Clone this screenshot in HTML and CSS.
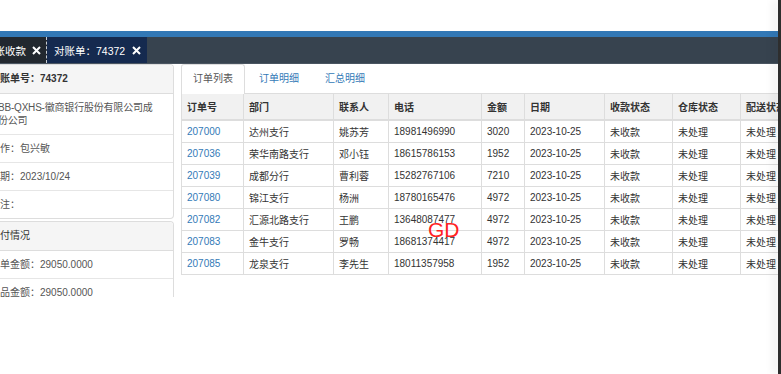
FILE: index.html
```html
<!DOCTYPE html>
<html lang="zh">
<head>
<meta charset="utf-8">
<link rel="stylesheet" href="styles.css">
</head>
<body>
<div class="page">
  <div class="top-space"></div>
  <div class="blue-bar"></div>
  <div class="tabbar">
    <div class="wtab wtab-prev"><span class="wtab-text">对账收款</span><svg class="x" viewBox="0 0 9 9"><path d="M1 1L8 8M8 1L1 8"/></svg></div>
    <div class="wtab wtab-cur"><span class="wtab-text">对账单：74372</span><svg class="x" viewBox="0 0 9 9"><path d="M1 1L8 8M8 1L1 8"/></svg></div>
  </div>
  <div class="content">
    <div class="left">
      <div class="panel">
        <div class="panel-head bold">账单号：74372</div>
        <div class="prow two">BB-QXHS-徽商银行股份有限公司成<br>份公司</div>
        <div class="prow">作：包兴敏</div>
        <div class="prow">期：2023/10/24</div>
        <div class="prow last">注：</div>
      </div>
      <div class="panel">
        <div class="panel-head">付情况</div>
        <div class="prow">单金额：29050.0000</div>
        <div class="prow">品金额：29050.0000</div>
      </div>
    </div>
    <div class="main">
      <div class="ntabs">
        <div class="ntab active">订单列表</div>
        <div class="ntab">订单明细</div>
        <div class="ntab">汇总明细</div>
      </div>
      <table class="grid">
        <colgroup>
          <col class="c1"><col class="c2"><col class="c3"><col class="c4"><col class="c5"><col class="c6"><col class="c7"><col class="c8"><col class="c9">
        </colgroup>
        <thead>
          <tr><th>订单号</th><th>部门</th><th>联系人</th><th>电话</th><th>金额</th><th>日期</th><th>收款状态</th><th>仓库状态</th><th>配送状态</th></tr>
        </thead>
        <tbody>
          <tr><td class="link">207000</td><td>达州支行</td><td>姚苏芳</td><td>18981496990</td><td>3020</td><td>2023-10-25</td><td>未收款</td><td>未处理</td><td>未处理</td></tr>
          <tr><td class="link">207036</td><td>荣华南路支行</td><td>邓小钰</td><td>18615786153</td><td>1952</td><td>2023-10-25</td><td>未收款</td><td>未处理</td><td>未处理</td></tr>
          <tr><td class="link">207039</td><td>成都分行</td><td>曹利蓉</td><td>15282767106</td><td>7210</td><td>2023-10-25</td><td>未收款</td><td>未处理</td><td>未处理</td></tr>
          <tr><td class="link">207080</td><td>锦江支行</td><td>杨洲</td><td>18780165476</td><td>4972</td><td>2023-10-25</td><td>未收款</td><td>未处理</td><td>未处理</td></tr>
          <tr><td class="link">207082</td><td>汇源北路支行</td><td>王鹏</td><td>13648087477</td><td>4972</td><td>2023-10-25</td><td>未收款</td><td>未处理</td><td>未处理</td></tr>
          <tr><td class="link">207083</td><td>金牛支行</td><td>罗畅</td><td>18681374417</td><td>4972</td><td>2023-10-25</td><td>未收款</td><td>未处理</td><td>未处理</td></tr>
          <tr><td class="link">207085</td><td>龙泉支行</td><td>李先生</td><td>18011357958</td><td>1952</td><td>2023-10-25</td><td>未收款</td><td>未处理</td><td>未处理</td></tr>
        </tbody>
      </table>
    </div>
  </div>
  <div class="watermark">GD</div>
  <div class="edge"></div>
</div>
</body>
</html>
```
FILE: styles.css
```css
html, body {
  margin: 0;
  padding: 0;
  background: #fff;
}
body {
  font-family: "Liberation Sans", "Noto Sans CJK SC", sans-serif;
  font-size: 10px;
  color: #333;
  width: 781px;
  height: 374px;
  overflow: hidden;
}
.page {
  position: relative;
  width: 781px;
  height: 374px;
  overflow: hidden;
}
.top-space {
  height: 31px;
}
.blue-bar {
  height: 6px;
  background: #3278b6;
}
.tabbar {
  height: 26px;
  background: #37434f;
  display: flex;
  border-bottom: 1px solid #4a5561;
}
.wtab {
  display: flex;
  align-items: center;
  color: #fff;
  font-size: 10.5px;
  white-space: nowrap;
  overflow: hidden;
}
.wtab-prev {
  width: 47px;
  background: #22282f;
  justify-content: flex-end;
  padding-right: 5px;
  box-sizing: border-box;
  border-right: 1px dashed #c8ccd2;
}
.wtab-cur {
  width: 100px;
  background: #152a4f;
  padding-left: 7px;
  box-sizing: border-box;
}
.x {
  width: 9px;
  height: 9px;
  margin-left: 6px;
  flex: none;
}
.wtab-cur .x {
  margin-left: 7px;
}
.x path {
  stroke: #fff;
  stroke-width: 2;
  fill: none;
}
.content {
  display: flex;
  height: 310px;
}
.left {
  width: 174px;
  height: 233px;
  overflow: hidden;
  flex: none;
}
.panel {
  border: 1px solid #dddddd;
  border-left: none;
  border-radius: 0 4px 4px 0;
  margin-bottom: 2px;
  background: #fff;
}
.panel-head {
  background: #f5f5f5;
  height: 28px;
  line-height: 28px;
  border-bottom: 1px solid #dddddd;
  border-radius: 0 4px 0 0;
  white-space: nowrap;
  color: #333;
}
.bold {
  font-weight: bold;
}
.prow {
  padding: 7px 0;
  line-height: 13px;
  border-bottom: 1px solid #e6e6e6;
  white-space: nowrap;
  color: #555;
}
.prow.two {
  line-height: 13px;
  margin-left: -2px;
  letter-spacing: -0.2px;
}
.prow.last {
  border-bottom: none;
}
.main {
  flex: 1;
  padding-left: 7px;
  overflow: hidden;
}
.ntabs {
  display: flex;
  height: 29px;
  border-bottom: 1px solid #dddddd;
}
.ntab {
  padding: 0 11px;
  margin-right: 2px;
  line-height: 28px;
  border: 1px solid transparent;
  border-bottom: none;
  color: #337ab7;
  white-space: nowrap;
}
.ntab.active {
  color: #555;
  background: #fff;
  border-color: #dddddd;
  border-radius: 3px 3px 0 0;
  height: 29px;
}
.grid {
  border-collapse: collapse;
  table-layout: fixed;
  width: 629px;
  border-left: 1px solid #dddddd;
}
.c1 { width: 62px; }
.c2 { width: 90px; }
.c3 { width: 55px; }
.c4 { width: 93px; }
.c5 { width: 43px; }
.c6 { width: 80px; }
.c7 { width: 68px; }
.c8 { width: 68px; }
.c9 { width: 70px; }
.grid th {
  background: #f1f1f1;
  text-align: left;
  font-weight: bold;
  height: 25px;
  padding: 0 5px;
  border: 1px solid #dddddd;
  border-top: none;
  border-bottom: 2px solid #dddddd;
  white-space: nowrap;
  overflow: hidden;
}
.grid td {
  height: 21px;
  padding: 0 5px;
  border: 1px solid #dddddd;
  white-space: nowrap;
  overflow: hidden;
  color: #333;
}
.grid td.link {
  color: #337ab7;
}
.watermark {
  position: absolute;
  left: 428px;
  top: 218px;
  font-size: 21px;
  line-height: 24px;
  color: #f22;
  font-family: "Liberation Sans", sans-serif;
}
.edge {
  position: absolute;
  top: 0;
  right: 0;
  width: 3px;
  height: 374px;
  background: #2e2e2e;
  box-shadow: -4px 0 8px rgba(0, 0, 0, 0.12);
}
```
